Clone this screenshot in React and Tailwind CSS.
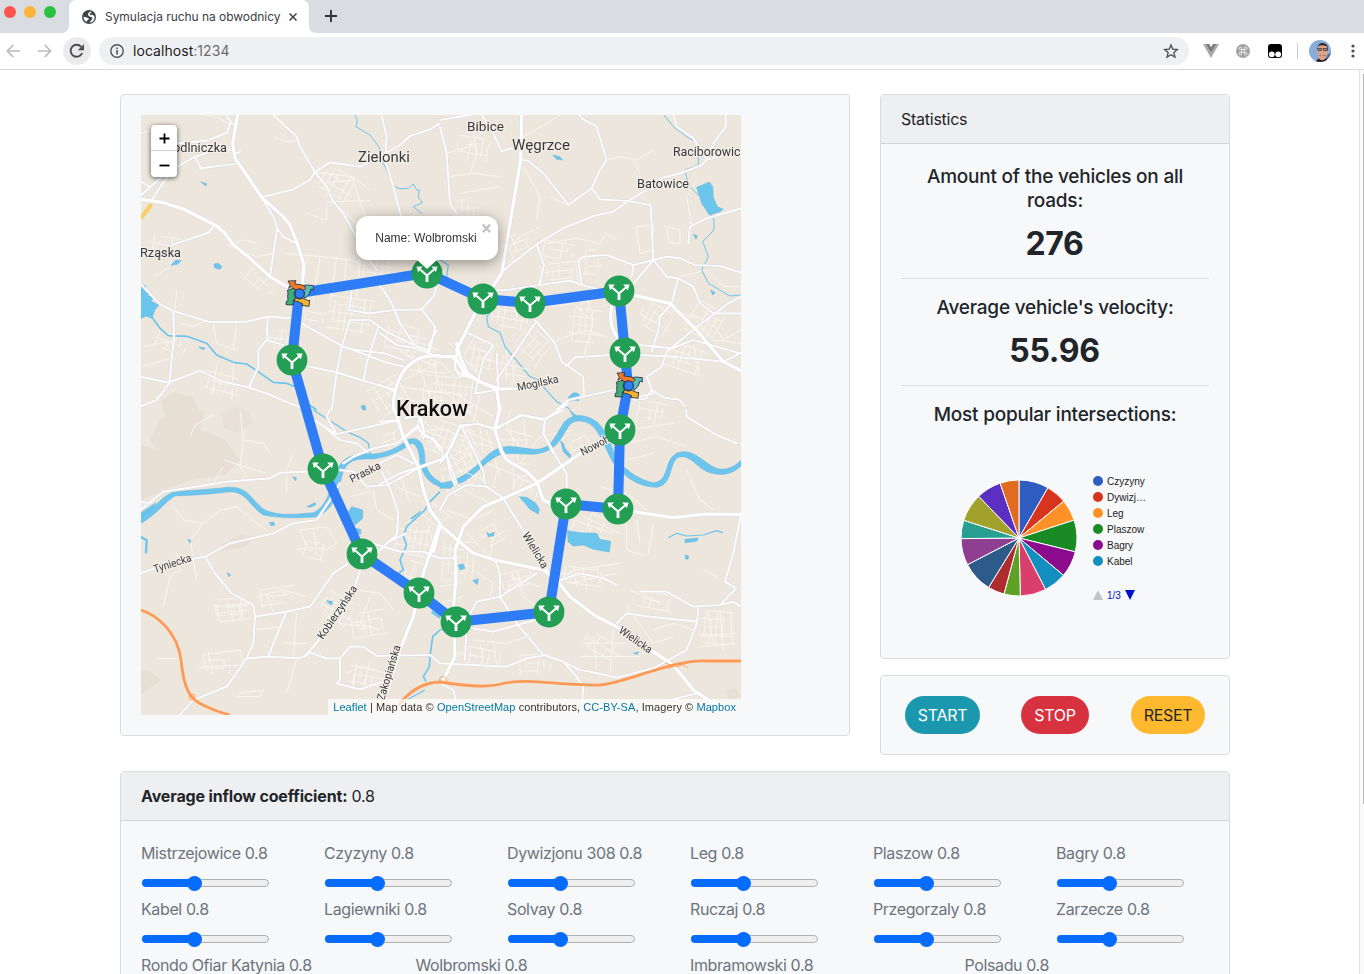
import React from "react";

const sf = "font-['Inter','Liberation_Sans',sans-serif]";
const arial = "font-['Liberation_Sans',Arial,sans-serif]";

/* ---------- map data: tiles with coordinates in thirds of a pixel ---------- */
const tiles = [
  {
    t: "translate(140 110) scale(0.33333)",
    water: [
      "M0 520L18 528 14 545 26 548 24 558 40 560 34 574 56 585 45 600 35 625 18 618 0 628Z",
      "M222 462L235 460 246 470 240 478 224 474Z", "M92 466L108 450 124 452 112 463Z",
      "M182 216L200 221 198 228Z", "M176 711L196 714 188 719Z", "M663 888L675 886 678 900 668 900Z",
    ],
    streams: [
      ["M35 620L60 655 85 677 140 679 200 700 230 735 280 757 320 762 350 782 400 817 440 820 465 830", 5],
      ["M508 885L530 900", 5],
      ["M645 15L652 30 648 50 690 75 720 115 718 140 738 175 760 228 780 236 805 235 820 222 830 240 838 240 835 262 847 278 820 290 845 310", 3],
    ],
    large: [
      "M293 15L285 60 278 100 285 145 320 195 365 262 430 320 450 345 470 395 492 465 487 520",
      "M0 268L65 277 130 297 225 345 255 370 280 405 330 445 390 500 440 530",
      "M760 900C758 850 775 800 800 772C830 742 860 735 900 737",
    ],
    med: [
      "M300 120Q300 132 285 128L275 118 230 120 165 140 120 165 75 210 35 270",
      "M120 165L60 205 0 258", "M0 212L30 232", "M270 40L262 68 200 92 110 100", "M258 15L275 40 290 42",
      "M180 175L285 162", "M165 140L185 178",
      "M400 15L470 80 480 110 525 187 560 230 580 275 610 310 640 365 680 440 710 480",
      "M525 187L570 157 660 170 700 150 780 105 810 78 870 58 900 40",
      "M365 262L460 238 510 210 525 187", "M365 262L400 320 412 355 430 380 468 400", "M412 355L400 430 390 500",
      "M95 405L205 368 225 345 240 350", "M0 520L60 582 100 603 205 635 250 637 320 635 385 620 460 625 520 660 610 710 680 735 730 755 790 770",
      "M100 603L102 680 88 820 50 870 0 890", "M0 800L85 818 160 790 180 782 250 815 325 832 380 850 450 880 500 900",
      "M383 620L380 690 355 720 355 770 327 832", "M380 690L430 705", "M500 768L590 787 670 812 760 838",
      "M590 787L605 710 630 630 690 630 740 665 820 705 870 722", "M590 787L575 900",
      "M670 812L680 760 715 650", "M625 600L690 610 760 600 845 598 885 650 870 725",
      "M628 600L635 545", "M690 500L730 540 755 580 780 640 820 700", "M845 598L880 560 890 530",
      "M725 15L740 80 735 150 760 230 782 315", "M605 710L650 720 735 730 790 750",
    ],
    thin: [
      "M195 15L240 25 270 45", "M0 70L40 60 70 80", "M100 420L90 470 40 500", "M480 90L440 95 400 80",
      "M525 187L640 200 690 240", "M545 220L640 210", "M560 275L690 272", "M560 280L560 330 500 310", "M580 275L660 350 730 320",
      "M640 210L660 275 680 330", "M440 430L640 450 700 490", "M500 445L490 540", "M540 440L520 570", "M590 440L570 590",
      "M270 410L310 390 350 400", "M260 405L350 440 400 430", "M110 540L105 600", "M120 640L160 650 190 635",
      "M10 710L110 690", "M5 770L90 745", "M220 640L230 700 290 720", "M290 640L280 715", "M230 760L220 850", "M280 760L275 870",
      "M30 80L50 130", "M620 450L610 540", "M660 460L650 560",
    ],
  },
  {
    t: "translate(440 110) scale(0.33333)",
    water: [
      "M770 232L808 216 818 230 820 262 832 290 850 298 838 306 808 315 785 280Z",
      "M338 135L360 140 368 150 350 148Z", "M760 373L772 378 768 388Z", "M385 862L400 848 416 852 412 866 390 872Z", "M812 540L826 548 818 555Z",
    ],
    streams: [
      ["M672 15L700 50 740 80 775 100 775 165 735 180 745 225 790 270 822 330 822 360 788 395 805 440 785 480 805 520 870 558 903 555", 3],
      ["M165 590L140 620 145 650 180 668 195 710 270 800 290 808 350 875 390 897", 3.5],
      ["M0 450L25 465 20 500", 3.5],
    ],
    large: [
      "M245 15L242 150 215 310 185 490 110 600 50 720", "M580 555L690 580 765 655 850 755 903 782",
      "M0 740L45 740 75 793 130 820 170 838 180 900", "M515 590C505 640 520 670 545 700",
    ],
    med: [
      "M0 30L60 20 95 15", "M0 50L20 130 30 280 50 310", "M125 15L160 70 185 125 240 105",
      "M242 150L265 152 310 190 385 285 455 235 480 180 500 150 470 50 430 28 418 15", "M455 235L480 268 565 273 632 285 640 450",
      "M185 485L290 403 370 355 460 318 520 305 565 273 610 245 680 225 660 205 720 190 785 165 800 150 850 135 903 120",
      "M290 403L312 465 298 525", "M160 540L200 540 300 525 390 512 425 525 500 545", "M425 525L415 450 430 440 500 435 580 465 640 450 680 500 715 505 760 530 780 580 820 610 903 610",
      "M580 465L575 500", "M560 545L640 450 680 440 720 445 765 465 840 468 903 488", "M715 505L695 580 660 620 655 660 635 725",
      "M745 400L750 350 800 325 903 295", "M800 150L820 100 857 50 857 15", "M700 15L710 50 760 85 790 130 800 150",
      "M765 655L865 580 903 560", "M765 655L680 725 665 770 620 800", "M600 705L695 715 760 690 900 730", "M600 735L700 740 850 755 903 728",
      "M285 630L345 700 365 755 430 800 432 860", "M285 640L170 810", "M350 900L385 870 520 840", "M380 768L405 742 510 735",
      "M50 720L45 780 80 800", "M85 670L160 705 130 750 105 850 170 840 240 835", "M170 730L175 840",
      "M620 800L635 840 670 862 720 870 735 890", "M580 870L620 865 635 840", "M560 870L640 850",
    ],
    thin: [
      "M250 80L320 40 360 15", "M250 170L300 260 290 330", "M20 130L90 110 130 60", "M30 200L100 190 180 200", "M60 250L180 230",
      "M100 60L110 130 90 190", "M330 260L380 285", "M500 150L540 140 590 150 640 120", "M580 150L600 190", "M320 400L410 385 480 400 500 370 530 390",
      "M590 350L640 345 640 420 600 430 590 350", "M680 350L720 360 720 400 690 400Z", "M770 210L740 260 755 350", "M200 420L240 380 300 350",
      "M200 560L270 600 260 640", "M300 560L340 590 400 580 440 620", "M350 690L440 660 500 680", "M440 560L460 640 430 740",
      "M690 600L760 620 820 690 903 700", "M720 500L800 480 850 530 903 530", "M820 640L850 690 903 660", "M760 700L780 800", "M220 560L230 620",
    ],
  },
  {
    t: "translate(140 410) scale(0.33333)",
    water: [
      "M0 320C40 300 65 260 95 248C140 240 200 240 260 232C330 228 330 270 375 300C420 320 470 312 520 308C560 290 570 240 585 200C600 140 640 128 700 132C740 130 780 110 800 90C850 72 855 120 855 160C865 190 880 205 900 215L900 230C870 220 850 200 840 160C840 130 830 100 815 100C790 120 750 140 700 147C640 145 620 150 605 200C595 250 580 300 530 320C470 325 420 325 370 315C330 290 320 245 270 245C200 255 150 255 105 258C80 270 55 310 0 342Z",
      "M625 305L635 290 668 300 668 325 645 345Z", "M645 355L662 358 662 372 650 372Z", "M500 290L525 278 528 284 510 292Z", "M388 338L400 336 405 344 394 348Z",
      "M458 200L470 204 466 212Z", "M560 572L578 574 574 586 566 580Z", "M262 488L272 494 266 500Z", "M144 388L152 390 150 400Z", "M0 310L48 278 40 292 8 318Z",
      "M812 325L842 303 838 310 818 326Z",
    ],
    streams: [
      ["M520 0L590 45 620 65 660 82 685 100 690 132", 4], ["M0 380L20 390 18 430", 7],
      ["M900 245L865 280 855 300 800 350 790 380 800 405 780 450 790 480 775 490", 5],
      ["M875 605L900 622", 8], ["M900 660L878 680 870 740 868 770 850 800 858 815", 5], ["M855 840L800 870", 4],
    ],
    large: ["M765 0L790 80 835 170 850 240 870 300 900 340", "M900 340L850 490 820 620 780 720 740 850", "M880 425L900 350"],
    med: [
      "M0 300L70 245 170 230 260 215 390 205 420 188 510 185", "M610 160L640 140 700 115 770 100 835 45 840 0", "M520 30L590 72 690 50 780 30",
      "M835 175L900 150", "M600 180L640 185 680 230 740 225 835 175", "M0 490L90 460 195 440 270 400 400 370 460 340 530 330 570 270 600 220",
      "M195 440L225 490 275 550 340 585 345 620 440 605 510 590 580 490 640 450",
      "M345 620L340 700 320 745 260 830 160 870 120 915", "M440 605L400 700 385 742", "M320 745L385 740 480 745 510 728 560 745 600 745 630 710 670 710 710 738 870 735 900 760",
      "M600 745L600 810 590 820 660 838 740 810", "M665 470L640 540 545 680 495 740", "M700 400L780 425 850 425 900 445", "M730 410L770 375 775 310 750 235 725 185",
      "M710 430L745 395 800 370", "M835 60L880 90 900 120", "M840 0L855 80", "M0 275L30 280 50 260", "M590 72L560 20 570 0", "M540 40L600 90 650 100 680 125",
    ],
    thin: [
      "M150 80L165 45 220 15", "M300 0L310 90 300 170 320 200", "M310 90L370 100 390 130", "M250 150L380 190", "M250 170L220 220",
      "M100 290L130 330 190 340 240 300 290 290 350 340 380 360", "M190 340L150 390 160 440", "M110 430L120 480 90 500 70 590", "M160 450L170 510",
      "M480 360L560 350 590 400 560 420 500 410Z", "M520 360L530 410", "M220 590L330 580", "M230 610L330 600", "M240 635L330 625", "M230 585L240 640", "M270 585L280 640", "M300 560L310 630",
      "M350 560L430 540 500 560", "M380 550L400 610", "M340 660L420 650", "M190 735L300 720 310 765 190 770Z", "M205 725L210 770",
      "M50 745L110 745", "M470 610L460 740", "M430 700L500 700", "M300 850L370 840 360 860 290 860Z", "M440 850L470 745",
      "M650 540L720 550 760 600", "M690 560L660 640 720 660", "M560 560L600 640 680 650", "M860 430L850 520 880 560", "M810 370L870 360 880 410 800 390",
      "M700 240L710 300 760 330", "M690 245L630 260", "M440 250L440 180 460 130", "M620 790L660 770 740 790", "M640 830L650 760", "M670 830L690 755",
    ],
  },
  {
    t: "translate(440 410) scale(0.33333)",
    water: [
      "M0 220L40 212C90 190 110 165 150 130C190 100 220 110 280 118C330 120 340 90 370 40C400 5 440 15 470 35C500 60 515 110 530 150C570 190 600 210 640 218C690 215 670 150 710 130C760 110 790 160 830 175C860 185 890 165 903 150L903 168C880 190 850 200 810 188C770 175 750 130 715 142C685 160 700 225 650 232C600 232 560 205 535 175C510 160 495 90 460 50C440 30 400 25 385 50C360 90 350 120 290 132C230 135 190 120 160 145C120 170 90 215 50 222L30 235 0 235Z",
      "M362 92L370 100 375 115 392 135 390 145 370 125Z", "M238 260L260 262 288 280 298 298 295 312 270 298Z",
      "M382 362L420 368 470 370 480 388 512 394 508 426 460 418 430 405 400 408 384 395Z",
      "M140 368L150 372 163 366 160 378 145 380Z", "M55 465L70 462 75 475 60 480Z", "M98 512L115 506 112 524Z", "M735 388L775 384 770 394 735 398Z",
      "M736 435L746 438 744 448 736 446Z", "M580 730L596 725 592 733Z", "M388 0L410 18 402 22Z",
    ],
    streams: [["M685 383L710 370 740 378 790 375 830 362 848 368", 3.5], ["M0 658L25 662", 4]],
    large: [
      "M178 0L165 60 185 125 200 150 260 185 290 215 310 270 340 285", "M490 85L400 145 290 220 190 265 130 290 70 350 45 420 48 500 40 600 45 740 10 810",
      "M0 345L100 430 165 450 310 480 350 510 390 560 470 620 530 650 640 725 700 765 760 840 830 885",
      "M580 305L700 323 800 312 903 313",
    ],
    med: [
      "M0 160L20 135 60 45 120 42 165 60 240 15 310 30 370 0", "M20 135L50 220", "M65 50L105 130 130 185 135 220", "M315 30L310 70 360 160 380 190 380 240",
      "M0 300L25 255 80 225 140 230 190 265 230 330 285 420 325 485", "M0 445L40 445", "M350 515L420 490 490 505 530 525", "M165 450L180 490 180 560 110 575 80 630 75 750",
      "M180 560L290 490", "M100 655L160 665 250 640 320 620", "M180 560L230 640 310 735 370 755 420 780 450 785 530 803 640 775 740 720 770 640 775 595",
      "M0 760L200 770 260 745 320 735", "M370 755L410 800 430 830 425 900", "M530 640L560 610 630 620 770 635", "M600 545L680 545 760 590 840 585 880 575 903 590",
      "M903 313L880 430 855 515 888 535 840 585", "M738 0L740 20 830 75 890 100", "M690 870L770 850", "M0 820L40 840 50 880", "M770 850L850 900",
    ],
    thin: [
      "M80 0L120 42", "M210 0L200 60 240 110", "M240 160L300 80 400 60", "M560 100L650 80 740 110", "M560 150L640 130", "M560 60L700 40", "M740 180L780 270 820 300",
      "M480 230L560 250 620 300", "M560 340L560 420 620 440", "M590 330L600 400", "M640 340L625 430", "M430 320L540 370", "M450 310L560 350", "M460 300L440 360", "M500 310L480 370",
      "M80 80L110 200", "M140 60L180 200", "M0 220L60 260", "M20 300L100 330 160 300", "M80 370L150 440 160 380", "M100 480L160 520 150 560", "M0 530L60 520",
      "M0 580L70 560", "M230 480L250 560 300 600", "M210 500L300 530", "M200 530L260 510", "M370 500L400 480 540 460", "M390 520L530 490", "M400 470L410 530", "M430 480L440 540", "M470 470L480 520",
      "M570 540L660 580", "M640 660L700 640 760 660", "M560 590L640 700 700 680", "M800 600L820 700", "M840 600L850 720", "M780 680L890 670", "M780 710L890 700", "M870 600L880 710",
      "M100 690L200 700 260 680", "M120 700L130 760", "M160 690L170 765", "M460 680L470 780", "M430 700L560 700", "M420 740L600 740", "M520 660L510 790", "M790 480L830 500",
    ],
  },
  {
    t: "translate(380 330) scale(0.33333)",
    water: ["M566 208L572 196 588 188 598 196 596 212Z"],
    streams: [],
    large: ["M230 40L240 80 262 130 300 155 350 175 358 235 347 292", "M232 75L222 85"],
    med: [
      "M0 10L50 45 110 55 155 72", "M170 0L148 40 145 70", "M75 265L118 258 135 320 160 325 185 355 190 385 120 410 60 430 0 462", "M80 320L118 290 130 325",
      "M190 385L215 350 240 290 290 282 345 295 430 255 495 268 565 220", "M495 268L490 310 520 370", "M200 375L210 430 225 465", "M0 165L45 185", "M0 275L50 270",
      "M222 85L228 120 240 140 265 135", "M350 175L400 175", "M0 400L50 375 100 400",
    ],
    thin: [
      "M60 170L200 190", "M70 150L180 95 225 140", "M110 90L150 200", "M160 90L180 180 250 200", "M50 200L110 215 180 200", "M90 120L200 130", "M130 210L200 250 280 230",
      "M200 190L270 250", "M240 200L340 260", "M300 190L280 280", "M250 300L340 340", "M240 330L330 350", "M260 290L290 350", "M300 290L310 370", "M60 60L100 90",
      "M140 280L190 330", "M130 300L210 300", "M380 300L460 320", "M390 280L400 350", "M430 260L440 350", "M380 60L380 150", "M400 90L400 160", "M370 100L450 120", "M370 130L440 140",
      "M20 420L50 470 120 500", "M60 430L90 520", "M250 480L330 520", "M320 400L420 440 460 430", "M400 400L400 480", "M350 420L340 480", "M240 420L310 450",
      "M290 10L250 80 300 140", "M300 80L330 90",
    ],
  },
];

/* dense residential street blocks: x, y, width, height, rotation */
const blocks = [
  [330, 295, 44, 34, 8], [390, 322, 40, 26, 14], [412, 340, 34, 22, 20], [395, 375, 30, 34, 60], [425, 375, 50, 40, 5], [470, 340, 36, 30, 12],
  [428, 415, 50, 32, 20], [400, 430, 26, 22, 70], [495, 300, 34, 26, 10], [540, 265, 40, 22, -6], [570, 300, 34, 40, 6], [530, 325, 30, 30, 40],
  [545, 240, 30, 16, 10], [500, 240, 28, 24, -20], [648, 300, 34, 24, 30], [668, 340, 40, 26, 18], [700, 300, 30, 34, 30], [580, 250, 22, 28, 0],
  [300, 310, 26, 18, 10], [270, 330, 28, 18, 5], [205, 370, 40, 22, 15], [160, 330, 30, 18, 20], [360, 255, 34, 22, 8], [330, 165, 34, 30, 30],
  [255, 265, 30, 18, 40], [450, 200, 30, 20, 0], [460, 135, 30, 22, 10], [155, 235, 26, 16, 10], [440, 470, 40, 30, -20], [470, 440, 34, 26, 60],
  [500, 440, 30, 24, 0], [400, 520, 30, 34, 10], [410, 560, 22, 24, 20], [445, 540, 30, 40, 5], [500, 575, 34, 20, -15], [560, 565, 44, 16, 8],
  [575, 520, 40, 14, 20], [520, 470, 24, 24, 20], [330, 590, 34, 28, 30], [350, 615, 34, 24, -10], [350, 665, 40, 20, 10], [460, 645, 44, 20, 10],
  [520, 655, 30, 20, 0], [590, 630, 40, 16, 30], [640, 590, 34, 16, 10], [700, 610, 34, 34, 5], [215, 600, 34, 20, -5], [300, 540, 26, 20, 10],
  [260, 590, 34, 18, -8], [500, 520, 20, 26, 60], [430, 500, 34, 20, 40], [640, 400, 28, 22, 10], [560, 440, 24, 18, -30], [200, 660, 36, 14, 0],
];

const streetBlocks = blocks.map(([x, y, w, h, a], i) => {
  let d = "";
  for (let k = 0; k * 6 <= w; k++) {
    if ((k * 7 + i * 3) % 5 === 0) continue;
    d += `M${k * 6} ${((k + i) % 3) * 4}V${h - ((k * 2 + i) % 3) * 4}`;
  }
  for (let k = 0; k * 8 <= h; k++) d += `M${((k + i) % 2) * 8} ${k * 8}H${w - ((k + i * 2) % 3) * 6}`;
  return <path key={i} d={d} transform={`translate(${x} ${y}) rotate(${a})`} />;
});

const places = [
  ["Bibice", 467, 131, 37, 13], ["Zielonki", 358, 162, 52, 15], ["Węgrzce", 512, 150, 58, 15], ["Raciborowic", 673, 156, 67.5, 13],
  ["Batowice", 637, 188, 52, 13], ["Modlniczka", 162, 152, 65, 13], ["Rząska", 140, 257, 41, 13],
];
const streets = [
  ["Mogilska", 42, -12, 518, 391], ["Praska", 33, -27, 352, 483], ["Tyniecka", 39, -18, 155, 573],
  ["Kobierzyńska", 62, -56, 323, 640], ["Zakopiańska", 57, -73, 384, 701], ["Wielicka", 40, 59, 522, 535],
  ["Wielicka", 38, 35, 618, 632], ["Nowohucka", 52, -28, 583, 456],
];

const junctions = [
  [427, 273], [483, 299], [530, 303], [619, 291], [625, 353], [620, 430], [618, 509], [566, 504],
  [549, 612], [456, 622], [419, 593], [362, 554], [323, 469], [292, 360],
];
const ring = "M299 293L427 273 483 299 530 303 619 291 625 353 628 386 620 430 618 509 566 504 549 612 456 622 419 593 362 554 323 469 292 360Z";

function Junction({ x, y }) {
  return (
    <g transform={`translate(${x} ${y})`}>
      <circle r="15.4" fill="#229f55" />
      <path d="M0 9V2.500L-7.500 -4M0 2.500L7.500 -4" fill="none" stroke="#fff" strokeWidth="2.1" />
      <path d="M0 9V3" stroke="#fff" strokeWidth="2.8" />
      <path d="M-10.600 -6.600L-4.200 -6.400 -8.900 -.7ZM10.600 -6.600L4.200 -6.400 8.900 -.7Z" fill="#fff" />
    </g>
  );
}

function Roundabout({ x, y }) {
  return (
    <g transform={`translate(${x} ${y}) scale(0.33333) translate(-87 -248)`} stroke="#25323c" strokeWidth="2.6" strokeLinejoin="round">
      <path d="M101 226L109 224 130 226 130 239 123 236Q120 254 105 264L101 257Q107 245 99 238Z" fill="#5bbcc0" />
      <path d="M76 262Q88 270 98 264L103 266 117 272 119 269 117 288 94 285 99 281Q84 272 73 272Z" fill="#fcb231" />
      <path d="M52 240L69 234 77 238Q67 250 77 263L70 269 70 284 48 283 49 273 54 271Q52 255 54 248Z" fill="#3fae79" />
      <path d="M54 212L78 211 74 221Q98 222 104 227L107 234 101 240Q88 232 79 238L72 236 65 228 56 234 61 224Z" fill="#f47a2a" />
      <circle cx="89" cy="250" r="14" fill="#2e7cf6" />
    </g>
  );
}

function CityMap() {
  return (
    <svg viewBox="141 115 600 600" width="600" height="600" className="block">
      <rect x="141" y="115" width="600" height="600" fill="#ede6dc" />
      <g fill="#ded5c8" opacity="0.38">
        <path d="M160 420L185 405 205 412 200 430 225 440 240 460 225 475 190 480 165 490 141 500V470L165 462 150 440Z" />
        <path d="M161 400l14-8 18 6 8 16-16 8-20-6Z" /><path d="M222 415l12-8 14 4 4 12-16 10-12-6Z" opacity=".7" />
        <path d="M141 445l20 6 12 14-12 18-20 6Z" /><path d="M141 470l24-6 10-14 22 4 14 12-30 12-22 14-18 4Z" />
        <path d="M220 545l20-10 16 2-12 10-22 4Z" /><path d="M141 670l10 2 10 8-14 10-6 6Z" />
        <path d="M725 690l10-2 6 8-12 4Z" />
      </g>
      <g fill="none" stroke="#f9f6f2" strokeWidth="0.8">{streetBlocks}</g>
      {tiles.map((tile, i) => (
        <g key={i} transform={tile.t} fill="none" strokeLinejoin="round">
          <path d={tile.thin.join("")} stroke="#f9f6f2" strokeWidth="2.8" />
          <path d={tile.water.join("")} fill="#6cc5ec" stroke="#62b4de" strokeWidth="1.5" />
          {tile.streams.map(([d, w]) => <path key={d} d={d} stroke="#6cc5ec" strokeWidth={w} />)}
        </g>
      ))}
      <g fill="none" strokeLinejoin="round" strokeLinecap="round">
        {tiles.map((tile, i) => (
          <g key={i} transform={tile.t} stroke="#dedbe3">
            <path d={tile.med.join("")} strokeWidth="8.5" />
            <path d={tile.large.join("")} strokeWidth="13" />
          </g>
        ))}
        {tiles.map((tile, i) => (
          <g key={i} transform={tile.t} stroke="#fff">
            <path d={tile.med.join("")} strokeWidth="5.2" />
            <path d={tile.large.join("")} strokeWidth="9.5" />
          </g>
        ))}
      </g>
      <path d="M141 218L151.500 204" stroke="#f7cf62" strokeWidth="4" />
      <g fill="none" stroke="#ff9a56" strokeWidth="2.8">
        <path d="M141 610C160 616 178 635 181 660C184 690 190 700 205 706C215 711 222 713 230 715" />
        <path d="M398 706C410 690 424 682 441 682C470 687 490 688 505 683C530 678 560 686 600 685C630 682 670 660 705 661H741" />
      </g>
      <g fill="none" stroke="#ff9a56" strokeWidth="0.8">
        <circle cx="192" cy="697" r="3" /><circle cx="443" cy="680" r="3.500" /><path d="M665 663l12 4 10-4M668 669l12-6 8 5" />
      </g>
      <g fill="#37393c" stroke="#f4efe8" strokeWidth="2.200" paintOrder="stroke" className="font-['Roboto',sans-serif]">
        {places.map(([t, x, y, w, s]) => (
          <text key={t} x={x} y={y} fontSize={s} textLength={w} lengthAdjust="spacingAndGlyphs">{t}</text>
        ))}
        {streets.map(([t, w, a, x, y]) => (
          <text key={t + x} transform={`translate(${x} ${y}) rotate(${a})`} fontSize="11" textLength={w} lengthAdjust="spacingAndGlyphs">{t}</text>
        ))}
        <text x="396" y="415.500" fontSize="21.500" fontWeight="500" fill="#101010" textLength="72" lengthAdjust="spacingAndGlyphs">Krakow</text>
      </g>
      <path d={ring} fill="none" stroke="#2e7cf6" strokeWidth="10" strokeLinejoin="round" />
      <Roundabout x={299} y={293} />
      <Roundabout x={628} y={385} />
      {junctions.map(([x, y]) => <Junction key={x + "-" + y} x={x} y={y} />)}
    </svg>
  );
}

function MapCard() {
  return (
    <section className="h-[642px] w-[730px] rounded-[4px] border border-[#d9dbdd] bg-[#f7f8fa] p-5">
      <div className={`relative h-[600px] w-[600px] overflow-hidden ${arial}`}>
        <CityMap />
        <div className="absolute left-[10px] top-[10px] w-[26px] rounded-[4px] bg-white text-black shadow-[0_1px_5px_rgba(0,0,0,0.65)]">
          <div className="flex h-[26px] items-center justify-center border-b border-[#ccc] pl-px pt-[2px]">
            <svg width="11" height="11" viewBox="0 0 11 11" stroke="currentColor" strokeWidth="1.800"><path d="M5.500 .5V10.500M.5 5.500H10.500" /></svg>
          </div>
          <div className="flex h-[26px] items-center justify-center pl-px pt-[2px]">
            <svg width="11" height="11" viewBox="0 0 11 11" stroke="currentColor" strokeWidth="1.800"><path d="M.5 5.500H10.500" /></svg>
          </div>
        </div>
        <div className="absolute left-[215px] top-[101px] flex h-[44px] w-[142px] items-center justify-center rounded-[12px] bg-white pb-px pr-[2px] text-[12px] tracking-[0.03px] text-[#333] shadow-[0_3px_14px_rgba(0,0,0,0.4)]">
          Name: Wolbromski
          <svg className="absolute right-[7px] top-[8px]" width="9" height="9" viewBox="0 0 9 9" stroke="#c3c3c3" strokeWidth="2.300"><path d="M.8.500L8.200 8.300M8.200.500L.8 8.300" /></svg>
        </div>
        <svg className="absolute left-[274px] top-[144px]" width="24" height="11" viewBox="0 0 24 11"><path d="M1 0H23L12 10Z" fill="#fff" /></svg>
        <div className="absolute bottom-0 right-0 h-[16px] whitespace-nowrap bg-white/70 px-[5px] text-[11px] leading-[16px] tracking-[0.075px] text-[#333]">
          <span className="text-[#0078a8]">Leaflet</span> | Map data © <span className="text-[#0078a8]">OpenStreetMap</span> contributors, <span className="text-[#0078a8]">CC-BY-SA</span>, Imagery © <span className="text-[#0078a8]">Mapbox</span>
        </div>
      </div>
    </section>
  );
}

const slices = [
  [0, "#2e5cc0"], [29.9, "#d6341f"], [50.5, "#ff9129"], [72, "#1a8a25"], [103.800, "#8c0a8c"], [130, "#128fbf"], [152.700, "#d93f6d"],
  [178.700, "#5ea125"], [195, "#ad2c2e"], [211.600, "#2d5b89"], [242.600, "#8f3f90"], [269.400, "#27a091"], [287.800, "#a2a12b"],
  [316, "#5a2fc2"], [341, "#e16b20"], [360, ""],
];
const rim = (deg) => {
  const r = (deg * Math.PI) / 180;
  return `${(58 * Math.sin(r)).toFixed(2)} ${(-58 * Math.cos(r)).toFixed(2)}`;
};
const legend = [["Czyzyny", "bg-[#2e5cc0]"], ["Dywizj…", "bg-[#d6341f]"], ["Leg", "bg-[#ff9129]"], ["Plaszow", "bg-[#1a8a25]"], ["Bagry", "bg-[#8c0a8c]"], ["Kabel", "bg-[#128fbf]"]];

function PieChart() {
  return (
    <div className={`flex pl-[79px] pt-[47px] text-[#222] ${arial}`}>
      <svg className="mt-[6px]" width="118" height="118" viewBox="-59 -59 118 118">
        {slices.slice(0, -1).map(([a, c], i) => (
          <path key={a} d={`M0 0L${rim(a)}A58 58 0 0 1 ${rim(slices[i + 1][0])}Z`} fill={c} stroke="#fff" strokeWidth="1" />
        ))}
      </svg>
      <div className="ml-[15px]">
        {legend.map(([name, c]) => (
          <div key={name} className="flex h-4 items-center gap-[4px] text-[10px] leading-4">
            <span className={`size-[10px] rounded-full ${c}`} /><span className="pt-px">{name}</span>
          </div>
        ))}
        <div className="mt-[18px] flex h-4 items-center text-[10px] text-[#0011cc]">
          <svg width="10" height="10" viewBox="0 0 10 10"><path d="M0 10H10L5 0Z" fill="#c4c4c4" /></svg>
          <span className="ml-[4px] mr-[4px]">1/3</span>
          <svg width="10" height="10" viewBox="0 0 10 10"><path d="M0 0H10L5 10Z" fill="#0011cc" /></svg>
        </div>
      </div>
    </div>
  );
}

function Stats() {
  const title = "pt-px text-[19px] font-medium leading-6 tracking-[-0.22px]";
  const value = "mt-[7px] pr-px text-[32px] font-bold leading-[48px] tracking-[-0.3px]";
  return (
    <section className="h-[565px] rounded-[4px] border border-[#d9dbdd] bg-[#f7f8fa]">
      <header className="h-[49px] border-b border-[#d2d4d6] bg-[#eeeff1] px-5 py-3 text-[16px] leading-[24px] tracking-[-0.25px]">Statistics</header>
      <div className="px-5 pt-5 text-center">
        <h5 className={title}>Amount of the vehicles on all<br />roads:</h5>
        <div className={value}>276</div>
        <hr className="mb-4 mt-[10px] border-[#dddfe1]" />
        <h5 className={title}>Average vehicle's velocity:</h5>
        <div className={value}>55.96</div>
        <hr className="mb-4 mt-[10px] border-[#dddfe1]" />
        <h5 className={title}>Most popular intersections:</h5>
      </div>
      <div className="-mt-px text-left"><PieChart /></div>
    </section>
  );
}

function Controls() {
  const b = "h-[38px] rounded-[19px] text-[16px] tracking-[-0.3px]";
  return (
    <section className="flex h-[80px] items-start rounded-[4px] border border-[#d9dbdd] bg-[#f7f8fa] px-6 pt-5">
      <button className={`${b} w-[75px] bg-[#1b98ae] text-white`}>START</button>
      <button className={`${b} ml-[41px] w-[68px] bg-[#d83240] text-white`}>STOP</button>
      <button className={`${b} ml-[42px] w-[74px] bg-[#ffb92e] text-[#212529]`}>RESET</button>
    </section>
  );
}

function Slider({ name }) {
  return (
    <div className="h-[56px]">
      <div className="whitespace-nowrap text-[16px] leading-6 tracking-[-0.38px] text-[#6c757d]">{name} 0.8</div>
      <div className="relative ml-px mt-[14px] h-2 w-[127px] rounded-full border border-[#b0b1b3] bg-[#efefef]">
        <div className="-ml-px -mt-px h-2 w-[52px] rounded-l-full bg-[#056cfe]" />
        <div className="absolute left-[43.5px] top-[-4.5px] size-[15px] rounded-full bg-[#056cfe]" />
      </div>
    </div>
  );
}

const sixes = ["Mistrzejowice", "Czyzyny", "Dywizjonu 308", "Leg", "Plaszow", "Bagry", "Kabel", "Lagiewniki", "Solvay", "Ruczaj", "Przegorzaly", "Zarzecze"];
const fours = ["Rondo Ofiar Katynia", "Wolbromski", "Imbramowski", "Polsadu"];

function Inflow() {
  return (
    <section className="mt-4 rounded-[4px] border border-[#d9dbdd] bg-[#f7f8fa]">
      <header className="h-[49px] border-b border-[#d2d4d6] bg-[#eeeff1] px-5 py-3 text-[16px] leading-6 tracking-[-0.3px]"><b className="tracking-[-0.15px]">Average inflow coefficient:</b> 0.8</header>
      <div className="pl-5 pt-5">
        <div className="grid w-[1098px] grid-cols-6">{sixes.map((n) => <Slider key={n} name={n} />)}</div>
        <div className="grid w-[1098px] grid-cols-4">{fours.map((n) => <Slider key={n} name={n} />)}</div>
      </div>
    </section>
  );
}

function Browser() {
  return (
    <header className="shrink-0">
      <div className="flex h-[33px] bg-[#d9dce1]">
        <div className="flex w-[61px] gap-2 pl-1 pt-[6px]">
          <i className="size-3 rounded-full bg-[#fc544e]" /><i className="size-3 rounded-full bg-[#fdb438]" /><i className="size-3 rounded-full bg-[#28c23f]" />
        </div>
        <svg width="8" height="33" viewBox="0 0 8 33" className="shrink-0"><path d="M8 0V25Q8 33 0 33H8Z" fill="#fff" /></svg>
        <div className="flex w-[240px] items-center rounded-t-[7px] bg-white pl-[13px]">
          <svg width="14" height="14" viewBox="0 0 14 14">
            <circle cx="7" cy="7" r="7" fill="#404348" />
            <path d="M8.200 1.500Q5.500 3 6 5.200L8 6.800 10.500 7.500Q10 10.800 7.200 12.500Q11.500 12.600 12.600 8.200L12.500 6.200 10.500 4.800 8.200 5 7.800 3.800 9.600 2.200Z" fill="#fff" />
            <path d="M1.500 6.800L4 7.200 6.600 8.200 6.800 9.600 5.200 10.300 4.800 12Q1.600 10.500 1.500 6.800Z" fill="#fff" />
          </svg>
          <span className="ml-[9px] w-[175px] whitespace-nowrap text-[12px] tracking-[-0.04px] text-[#3c4043]">Symulacja ruchu na obwodnicy</span>
          <svg className="ml-[9px]" width="8" height="8" viewBox="0 0 8 8" stroke="#3c4043" strokeWidth="1.500"><path d="M.5.500L7.500 7.500M7.500.500L.5 7.500" /></svg>
        </div>
        <svg width="8" height="33" viewBox="0 0 8 33" className="shrink-0"><path d="M0 0V25Q0 33 8 33H0Z" fill="#fff" /></svg>
        <svg className="ml-[8px] mt-[10px]" width="12" height="12" viewBox="0 0 12 12" stroke="#303337" strokeWidth="1.900"><path d="M6 0V12M0 6H12" /></svg>
      </div>
      <div className="flex h-[37px] items-center border-b border-[#d7d9dc] bg-white pl-[6px]">
        <svg width="14" height="14" viewBox="0 0 14 14" fill="none" stroke="#b9bbbe" strokeWidth="1.700"><path d="M14 7H1.500M7.300 1L1.300 7 7.300 13" /></svg>
        <svg className="ml-[18px]" width="14" height="14" viewBox="0 0 14 14" fill="none" stroke="#b9bbbe" strokeWidth="1.700"><path d="M0 7H12.500M6.700 1L12.700 7 6.700 13" /></svg>
        <div className="ml-[11px] flex size-7 items-center justify-center rounded-full bg-[#ebebec]">
          <svg width="16" height="16" viewBox="0 0 16 16"><path d="M13.200 10A6 6 0 1 1 12.200 3.800" fill="none" stroke="#4b4e52" strokeWidth="1.900" /><path d="M15 1V7.200H8.800Z" fill="#4b4e52" /></svg>
        </div>
        <div className="ml-2 flex h-7 w-[1090px] items-center rounded-full bg-[#eff0f2] pl-[11px] pr-[10px]">
          <svg width="14" height="14" viewBox="0 0 14 14"><circle cx="7" cy="7" r="6.200" fill="none" stroke="#505357" strokeWidth="1.400" /><path d="M7 6V10.500M7 3.400V5" stroke="#505357" strokeWidth="1.600" /></svg>
          <span className="ml-[9px] flex-1 pb-[2px] text-[14px] tracking-[0.05px] text-[#202124]">localhost<span className="text-[#696c70]">:1234</span></span>
          <svg width="16" height="16" viewBox="0 0 24 24" fill="none" stroke="#4a4d51" strokeWidth="2"><path d="M12 3L14.600 9.300 21.500 9.900 16.300 14.400 17.900 21 12 17.500 6.100 21 7.700 14.400 2.500 9.900 9.400 9.300Z" /></svg>
        </div>
        <svg className="ml-[14px]" width="16" height="14" viewBox="0 0 16 14"><path d="M0 0H6L8 3.500 10 0H16L8 14Z" fill="#a9a9a9" /><path d="M3 0H6L8 3.500 10 0H13L8 8.500Z" fill="#7c7c7c" /></svg>
        <svg className="ml-[17px]" width="14" height="14" viewBox="0 0 14 14"><circle cx="7" cy="7" r="7" fill="#a3a3a3" /><path d="M5.500 5.500H8.500V8.500H5.500ZM5.500 5.500H4.500A1.200 1.200 0 1 1 5.500 4.300ZM8.500 5.500V4.300A1.200 1.200 0 1 1 9.500 5.500ZM8.500 8.500H9.500A1.200 1.200 0 1 1 8.500 9.700ZM5.500 8.500V9.700A1.200 1.200 0 1 1 4.500 8.500Z" fill="none" stroke="#eee" strokeWidth=".9" /></svg>
        <svg className="ml-[18px]" width="14" height="14" viewBox="0 0 14 14"><rect width="14" height="14" rx="3" fill="#000" /><circle cx="3.800" cy="10.300" r="2.900" fill="#fff" /><circle cx="10.200" cy="10.300" r="2.900" fill="#fff" /></svg>
        <i className="ml-[15px] h-4 w-px bg-[#c9cbce]" />
        <svg className="ml-[11px] rounded-full" width="22" height="22" viewBox="0 0 22 22">
          <rect width="22" height="22" fill="#87aedb" /><path d="M14 22L19 14 22 13V22Z" fill="#4f6b96" />
          <path d="M6 22L10 18 17 18 20 22Z" fill="#232029" />
          <ellipse cx="13.500" cy="12" rx="5.200" ry="8.400" fill="#dba388" transform="rotate(5 13.500 12)" />
          <path d="M8.300 8Q9 3 14 3Q19.500 3.500 19 10L17.800 6.300Q13 4.600 9.500 5.800Z" fill="#30262a" />
          <path d="M8.500 8.500H12.500V10.500H9ZM14 8.500H18.500V10.500H14.500Z" fill="#b58474" stroke="#3a2f34" strokeWidth=".7" />
          <path d="M10.500 15.500Q13.500 18.500 16.500 15.500Q13.500 16 10.500 15.500Z" fill="#fff" stroke="#8b4a44" strokeWidth=".5" />
        </svg>
        <svg className="ml-[20px]" width="4" height="14" viewBox="0 0 4 14" fill="#4b4e52"><circle cx="2" cy="2" r="1.600" /><circle cx="2" cy="7" r="1.600" /><circle cx="2" cy="12" r="1.600" /></svg>
      </div>
    </header>
  );
}

export default function App() {
  return (
    <div className={`flex h-[974px] w-[1364px] flex-col overflow-hidden bg-white text-[#212529] ${sf}`}>
      <Browser />
      <div className="flex min-h-0 flex-1">
        <main className="w-[1359px] shrink-0 overflow-hidden pl-[120px] pt-6">
          <div className="w-[1110px]">
            <div className="flex gap-[30px]">
              <MapCard />
              <div className="flex w-[350px] flex-col gap-4"><Stats /><Controls /></div>
            </div>
            <Inflow />
          </div>
        </main>
        <div className="flex flex-1 justify-end border-l border-[#e3e3e3] bg-[#fafafa] pt-1"><i className="h-[730px] w-px bg-[#b9b9b9]" /></div>
      </div>
    </div>
  );
}
